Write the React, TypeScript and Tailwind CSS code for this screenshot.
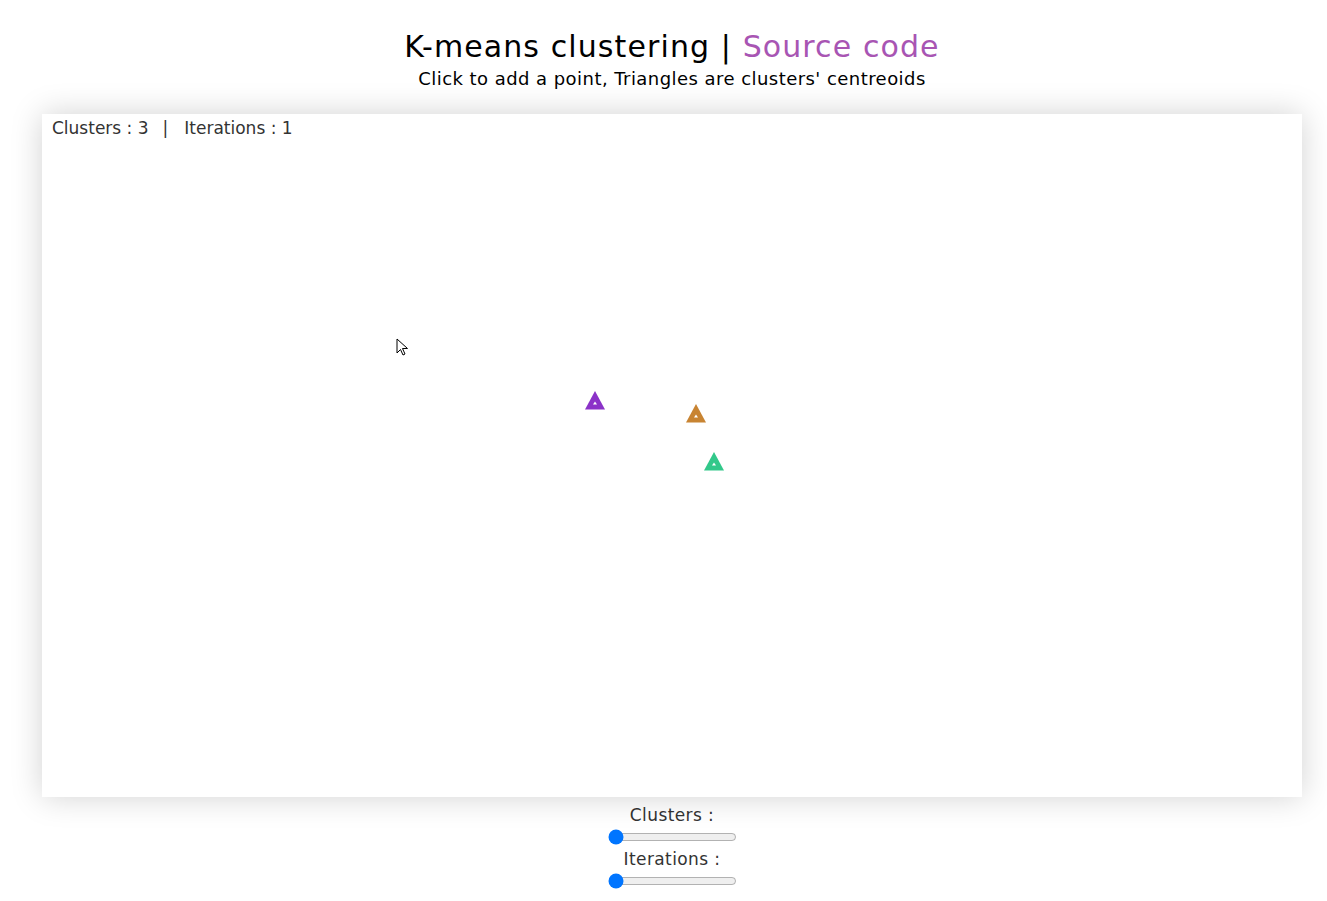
import { useState } from "react";

const centroids = [
  { x: 553, y: 286, color: "#8b32c8" },
  { x: 654, y: 299, color: "#c88432" },
  { x: 672, y: 347, color: "#32c88a" },
];

function Centroid({ x, y, color }: { x: number; y: number; color: string }) {
  return (
    <svg
      className="absolute"
      style={{ left: x - 10, top: y - 10 }}
      width="20"
      height="20"
      viewBox="0 0 20 20"
    >
      <polygon points="10,1 20,19.5 0,19.5" fill={color} />
      <polygon points="10,11.5 12,14.5 8,14.5" fill="#fff" />
    </svg>
  );
}

export default function App() {
  const [clusters, setClusters] = useState(1);
  const [iterations, setIterations] = useState(1);

  return (
    <div
      className="min-h-screen bg-white pl-[17px] text-black"
      style={{ fontFamily: '"DejaVu Sans", sans-serif' }}
    >
      <div className="pt-[28px] text-center">
        <h1 className="text-[30px] leading-[38px] font-normal tracking-[1.1px]">
          K-means clustering |{" "}
          <a href="#" className="text-[#a855b3]">
            Source code
          </a>
        </h1>
        <p className="mt-[2px] text-[18px] leading-[22px] font-normal tracking-[0.45px]">
          Click to add a point, Triangles are clusters' centreoids
        </p>
      </div>

      <div className="relative mx-auto mt-[24px] h-[683px] w-[1260px] bg-white shadow-[0_0_30px_rgba(0,0,0,0.18)]">
        <div className="absolute left-[10px] top-[2px] flex text-[17px] text-[#333]">
          <span>Clusters : 3</span>
          <span className="ml-[14px] mr-[16px]">|</span>
          <span>Iterations : 1</span>
        </div>
        {centroids.map((c, i) => (
          <Centroid key={i} {...c} />
        ))}
        <svg className="absolute left-[354px] top-[224px]" width="14" height="20" viewBox="0 0 14 20">
          <path d="M1 1 L1 15 L4.5 11.5 L7 17 L9 16 L6.5 10.5 L11.5 10.5 Z" fill="#fff" stroke="#000" strokeWidth="1" />
        </svg>
      </div>

      <div className="mt-[4px] flex flex-col items-center text-[17px] font-normal tracking-[0.4px] text-[#333]">
        <label className="leading-[28px]">Clusters :</label>
        <input
          type="range"
          min={1}
          max={10}
          value={clusters}
          onChange={(e) => setClusters(Number(e.target.value))}
        />
        <label className="leading-[28px]">Iterations :</label>
        <input
          type="range"
          min={1}
          max={10}
          value={iterations}
          onChange={(e) => setIterations(Number(e.target.value))}
        />
      </div>
    </div>
  );
}
